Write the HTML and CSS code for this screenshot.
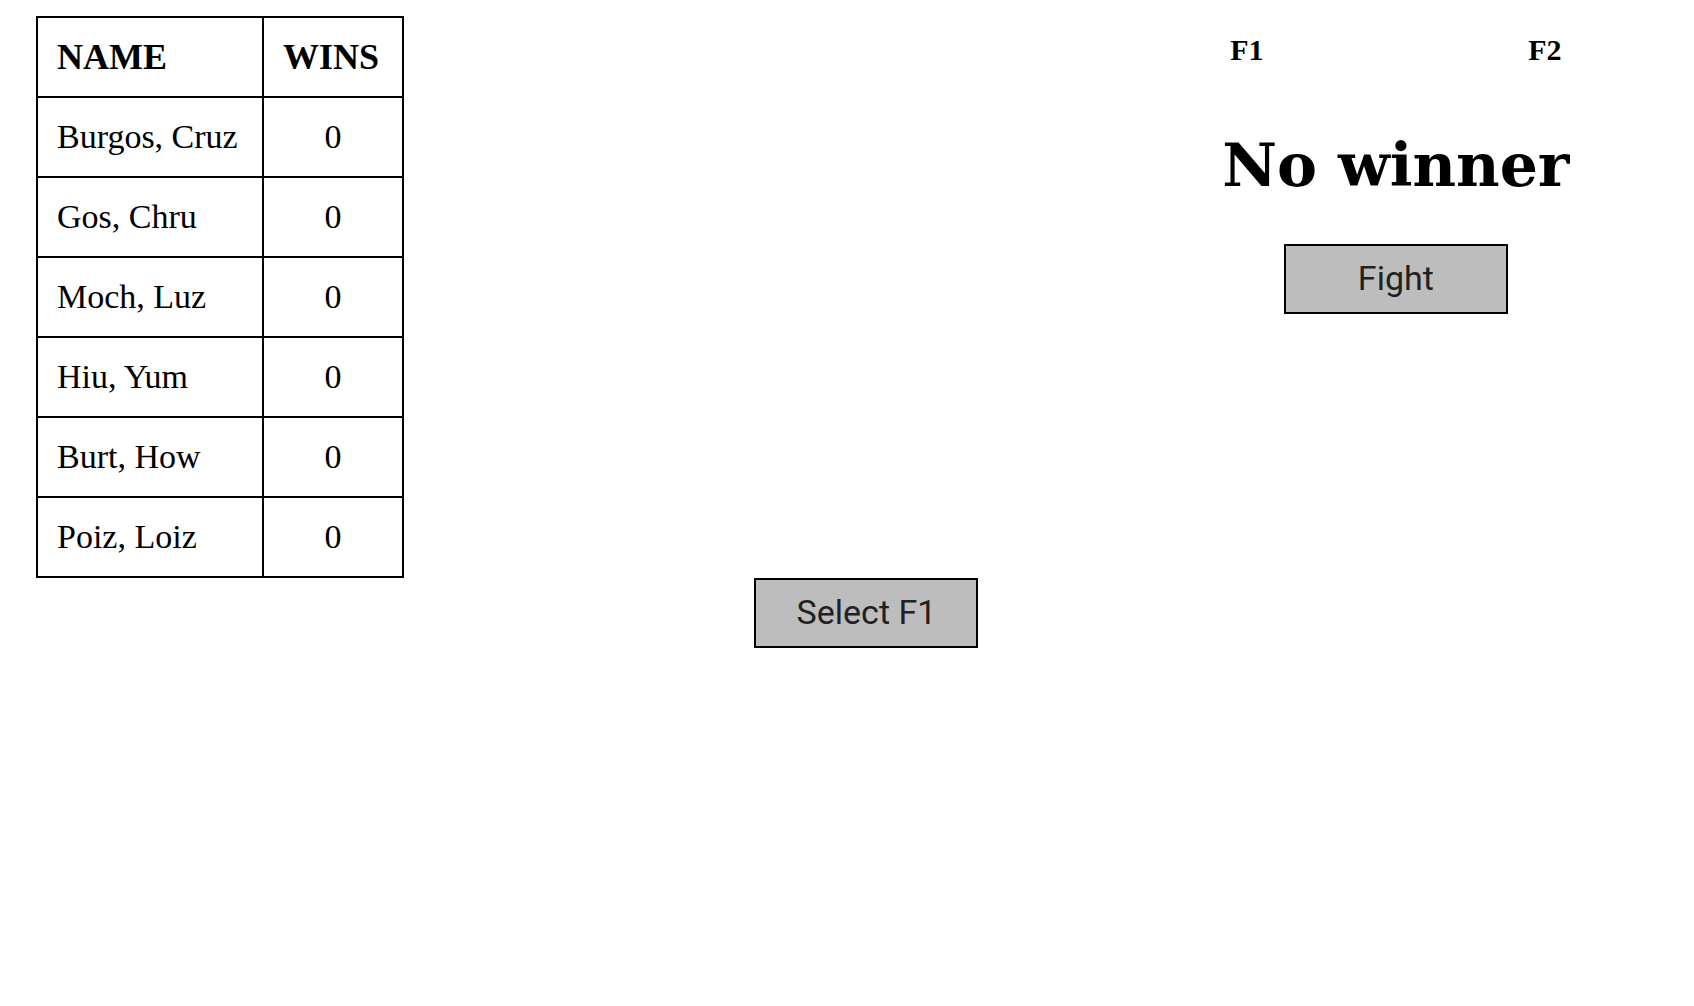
FILE: index.html
```html
<!DOCTYPE html>
<html lang="en">
<head>
  <meta charset="utf-8">
  <meta name="viewport" content="width=device-width, initial-scale=1">
  <title>Fight</title>
  <link rel="stylesheet" href="styles.css">
</head>
<body>
  <main class="arena">
    <table class="roster">
      <thead>
        <tr><th scope="col">NAME</th><th scope="col">WINS</th></tr>
      </thead>
      <tbody>
        <tr><td>Burgos, Cruz</td><td class="wins">0</td></tr>
        <tr><td>Gos, Chru</td><td class="wins">0</td></tr>
        <tr><td>Moch, Luz</td><td class="wins">0</td></tr>
        <tr><td>Hiu, Yum</td><td class="wins">0</td></tr>
        <tr><td>Burt, How</td><td class="wins">0</td></tr>
        <tr><td>Poiz, Loiz</td><td class="wins">0</td></tr>
      </tbody>
    </table>
    <button class="button select" type="button">Select F1</button>
    <section class="match">
      <div class="fighters">
        <h4 class="fighter">F1</h4>
        <h4 class="fighter">F2</h4>
      </div>
      <h1 class="result">No winner</h1>
      <button class="button" type="button">Fight</button>
    </section>
  </main>
</body>
</html>
```
FILE: styles.css
```css
* {
  box-sizing: border-box;
}

body {
  margin: 0;
  background: #fff;
  color: #000;
  font-family: Georgia, "Liberation Serif", serif;
}

.arena {
  display: grid;
  grid-template-columns: 37.5% 1fr 35.2%;
  grid-template-rows: auto auto;
  padding-top: 16px;
}

.roster {
  justify-self: start;
  margin-left: 36px;
  border-collapse: collapse;
  font-size: 34px;
  line-height: 38px;
}

.roster th,
.roster td {
  padding: 20px 19px;
  border: 2px solid #000;
  text-align: left;
}

.roster th {
  font-size: 36px;
}

.roster th:first-child {
  width: 226px;
}

.roster th:last-child {
  width: 140px;
}

.roster .wins {
  text-align: center;
}

.select {
  grid-column: 2;
  grid-row: 2;
  justify-self: center;
}

.match {
  grid-column: 3;
  grid-row: 1 / 3;
  display: flex;
  flex-direction: column;
  align-items: center;
}

.fighters {
  display: grid;
  grid-template-columns: 1fr 1fr;
  width: 100%;
  padding-top: 18px;
}

.fighter {
  margin: 0;
  font-size: 30px;
  line-height: 32px;
  text-align: center;
}

.result {
  margin: 62px 0 42px;
  font-family: "DejaVu Serif", serif;
  font-size: 60px;
  line-height: 74px;
}

.button {
  width: 224px;
  height: 70px;
  padding: 0 0 2px;
  border: 2px solid #000;
  border-radius: 0;
  background: #bdbdbd;
  color: #212121;
  font-family: Roboto, sans-serif;
  font-size: 34px;
}
```
